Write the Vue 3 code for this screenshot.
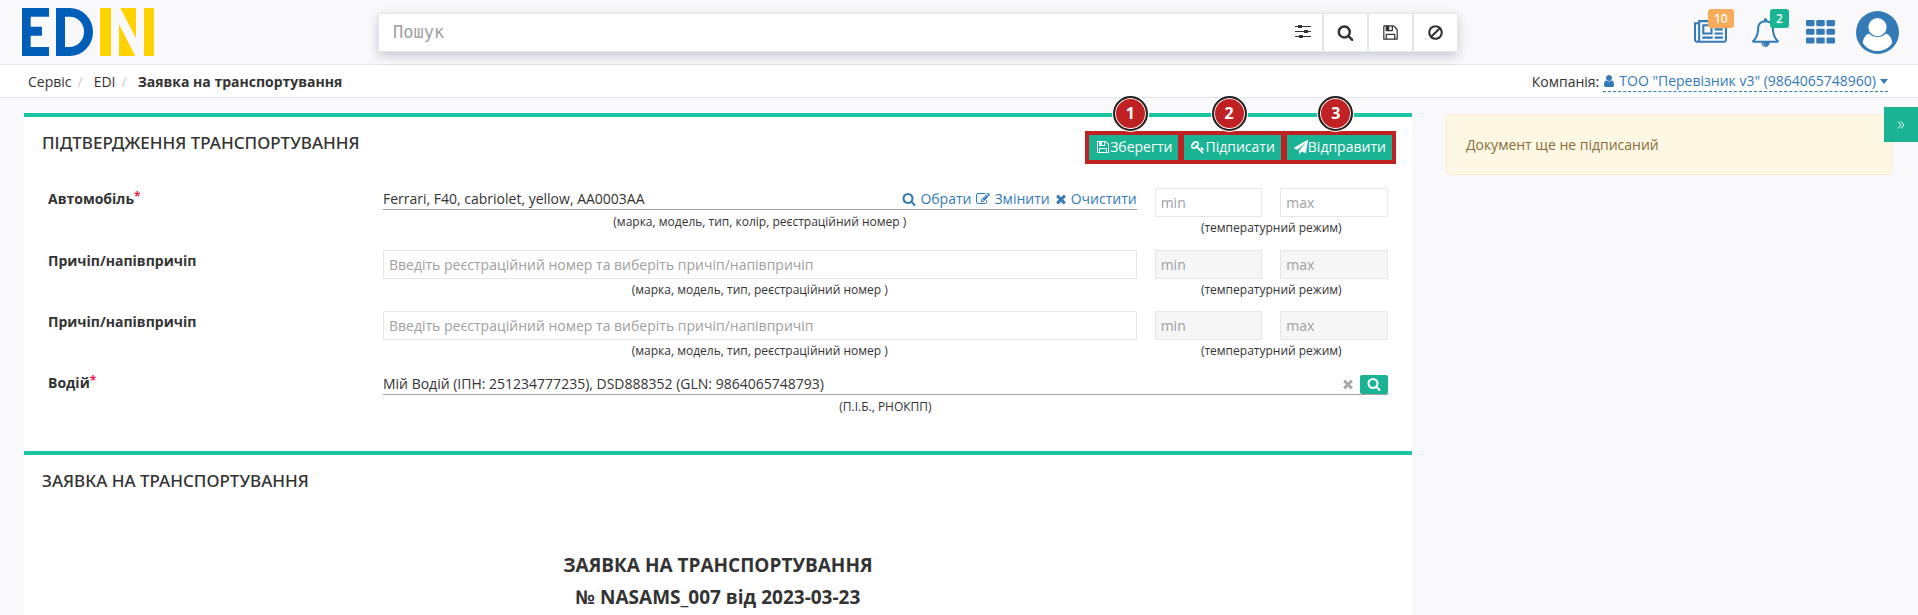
<script setup>
import { ref } from 'vue'

const icons = {
  search: 'M1216 832q0-185-131.5-316.5t-316.5-131.5-316.5 131.5-131.5 316.5 131.5 316.5 316.5 131.5 316.5-131.5 131.5-316.5zm512 832q0 52-38 90t-90 38q-54 0-90-38l-343-342q-179 124-399 124-143 0-273.5-55.5t-225-150-150-225-55.5-273.5 55.5-273.5 150-225 225-150 273.5-55.5 273.5 55.5 225 150 150 225 55.5 273.5q0 220-124 399l343 343q37 37 37 90z',
  save: 'M512 1536h768v-384h-768v384zm896 0h128v-896q0-14-10-38.5t-20-34.5l-281-281q-10-10-34-20t-39-10v416q0 40-28 68t-68 28h-576q-40 0-68-28t-28-68v-416h-128v1280h128v-416q0-40 28-68t68-28h832q40 0 68 28t28 68v416zm-384-928v-320q0-13-9.5-22.5t-22.5-9.5h-192q-13 0-22.5 9.5t-9.5 22.5v320q0 13 9.5 22.5t22.5 9.5h192q13 0 22.5-9.5t9.5-22.5zm640 32v928q0 40-28 68t-68 28h-1344q-40 0-68-28t-28-68v-1344q0-40 28-68t68-28h928q40 0 88 20t76 48l280 280q28 28 48 76t20 88z',
  ban: 'M1440 893q0-161-87-295l-754 753q137 89 297 89 111 0 211.5-43.5t173.5-116.5 116-174.5 43-212.5zm-999 299l755-754q-135-91-300-91-148 0-273 73t-198 199-73 274q0 162 89 299zm1223-299q0 157-61 300t-163.5 246-245 164-298.5 61-298.5-61-245-164-163.5-246-61-300 61-299.5 163.5-245.5 245-164 298.5-61 298.5 61 245 164 163.5 245.5 61 299.5z',
  times: 'M1490 1322q0 40-28 68l-136 136q-28 28-68 28t-68-28l-294-294-294 294q-28 28-68 28t-68-28l-136-136q-28-28-28-68t28-68l294-294-294-294q-28-28-28-68t28-68l136-136q28-28 68-28t68 28l294 294 294-294q28-28 68-28t68 28l136 136q28 28 28 68t-28 68l-294 294 294 294q28 28 28 68z',
  edit: 'M888 1184l116-116-152-152-116 116v56h96v96h56zm440-720q-16-16-33 1l-350 350q-17 17-1 33t33-1l350-350q17-17 1-33zm80 594v190q0 119-84.5 203.5t-203.5 84.5h-832q-119 0-203.5-84.5t-84.5-203.5v-832q0-119 84.5-203.5t203.5-84.5h832q63 0 117 25 15 7 18 23 3 17-9 29l-49 49q-14 14-32 8-23-6-45-6h-832q-66 0-113 47t-47 113v832q0 66 47 113t113 47h832q66 0 113-47t47-113v-126q0-13 9-22l64-64q15-15 35-7t20 29zm-96-738l288 288-672 672h-288v-288zm444 132l-92 92-288-288 92-92q28-28 68-28t68 28l152 152q28 28 28 68t-28 68z',
  user: 'M1536 1399q0 109-62.5 187t-150.5 78h-854q-88 0-150.5-78t-62.5-187q0-85 8.5-160.5t31.5-152 58.5-131 94-89 134.5-34.5q131 128 313 128t313-128q76 0 134.5 34.5t94 89 58.5 131 31.5 152 8.5 160.5zm-256-887q0 159-112.5 271.5t-271.5 112.5-271.5-112.5-112.5-271.5 112.5-271.5 271.5-112.5 271.5 112.5 112.5 271.5z',
  key: 'M832 512q0-80-56-136t-136-56-136 56-56 136q0 42 19 83-41-19-83-19-80 0-136 56t-56 136 56 136 136 56 136-56 56-136q0-42-19-83 41 19 83 19 80 0 136-56t56-136zm851 704q0 17-49 66t-66 49q-9 0-28.5-16t-36.5-33-38.5-40-24.5-26l-96 96 220 220q28 28 28 68 0 42-39 81t-81 39q-40 0-68-28l-671-671q-176 131-365 131-163 0-265.5-102.5t-102.5-265.5q0-160 95-313t248-248 313-95q163 0 265.5 102.5t102.5 265.5q0 189-131 365l355 355 96-96q-3-3-26-24.5t-40-38.5-33-36.5-16-28.5q0-17 49-66t66-49q13 0 23 10 6 6 46 44.5t82 79.5 86.5 86 73 78 28.5 41z',
  send: 'M1764 11q33 24 27 64l-256 1536q-5 29-32 45-14 8-31 8-11 0-24-5l-453-185-242 295q-18 23-49 23-13 0-22-4-19-7-30.5-23.5t-11.5-36.5v-349l864-1059-1069 925-395-162q-37-14-40-55-2-40 32-59l1664-960q15-9 32-9 20 0 36 11z',
  news: 'M1024 512h-384v384h384v-384zm128 640v128h-640v-128h640zm0-768v640h-640v-640h640zm640 768v128h-512v-128h512zm0-256v128h-512v-128h512zm0-256v128h-512v-128h512zm0-256v128h-512v-128h512zm-1536 960v-960h-128v960q0 26 19 45t45 19 45-19 19-45zm1664 0v-1088h-1536v1088q0 33-11 64h1483q26 0 45-19t19-45zm128-1216v1216q0 80-56 136t-136 56h-1664q-80 0-136-56t-56-136v-1088h256v-128h1792z',
  bell: 'M912 1696q0-16-16-16-59 0-101.5-42.5t-42.5-101.5q0-16-16-16t-16 16q0 73 51.5 124.5t124.5 51.5q16 0 16-16zm-666-288h1300q-266-300-266-832 0-51-24-105t-69-103-121.5-80.5-169.5-31.5-169.5 31.5-121.5 80.5-69 103-24 105q0 532-266 832zm1482 0q0 52-38 90t-90 38h-448q0 106-75 181t-181 75-181-75-75-181h-448q-52 0-90-38t-38-90q50-42 91-88t85-119.5 74.5-158.5 50-206 19.5-260q0-152 117-282.5t307-158.5q-8-19-8-39 0-40 28-68t68-28 68 28 28 68q0 20-8 39 190 28 307 158.5t117 282.5q0 139 19.5 260t50 206 74.5 158.5 85 119.5 91 88z'
}

const query = ref('')
const car = ref('Ferrari, F40, cabriolet, yellow, AA0003AA')
const driver = ref('Мій Водій (ІПН: 251234777235), DSD888352 (GLN: 9864065748793)')
const carRange = ref({ min: '', max: '' })
const trailers = ref([{ id: 'trailer-1', number: '' }, { id: 'trailer-2', number: '' }])

const actions = [
  { n: 1, label: 'Зберегти', icon: 'save' },
  { n: 2, label: 'Підписати', icon: 'key' },
  { n: 3, label: 'Відправити', icon: 'send' }
]
</script>

<template>
  <div class="page">
    <header class="topbar">
      <a class="logo" href="#" aria-label="EDIN">
        <svg viewBox="66 24 396 144">
          <g fill="#005eb8">
            <path d="M66 24h81v26H92v30h34v27H92v34h55v27H66z" />
            <path fill-rule="evenodd" d="M168 24h41a70 72 0 0 1 0 144h-41zM195 50v91h14a43 45.500 0 0 0 0-91z" />
          </g>
          <path fill="#ffd200" d="M300 24h33v144h-33zM361 24h47v91zM357 73l49 95h-49zM432 24h30v144h-30z" />
        </svg>
      </a>

      <form class="search" role="search" @submit.prevent>
        <input v-model="query" class="search-input" type="text" placeholder="Пошук" aria-label="Пошук" />
        <button class="filter" type="button" aria-label="Фільтри">
          <svg viewBox="0 0 16 14" fill="currentColor">
            <path d="M0 1h16v1H0zM0 6h16v1H0zM0 11h16v1H0z" />
            <path d="M3 0h4v3H3zM9 5h4v3H9zM4 10h4v3H4z" />
          </svg>
        </button>
        <button type="submit" aria-label="Шукати"><svg class="i17" viewBox="0 0 1792 1792"><path :d="icons.search" /></svg></button>
        <button type="button" aria-label="Зберегти пошук"><svg class="i17" viewBox="0 0 1792 1792"><path :d="icons.save" /></svg></button>
        <button type="button" aria-label="Скинути"><svg class="i17" viewBox="0 0 1792 1792"><path :d="icons.ban" /></svg></button>
      </form>

      <nav class="tools">
        <a class="tool news" href="#" aria-label="Новини">
          <svg viewBox="0 0 2048 1792"><path :d="icons.news" /></svg>
          <span class="count orange">10</span>
        </a>
        <a class="tool bell" href="#" aria-label="Сповіщення">
          <svg viewBox="0 0 1792 1792"><path :d="icons.bell" /></svg>
          <span class="count green">2</span>
        </a>
        <a class="tool apps" href="#" aria-label="Застосунки">
          <svg viewBox="0 0 85 69">
            <template v-for="r in 3" :key="r">
              <rect v-for="c in 3" :key="c" :x="(c - 1) * 30" :y="(r - 1) * 25.5" width="25" height="18" rx="4" />
            </template>
          </svg>
        </a>
        <a class="tool avatar" href="#" aria-label="Профіль">
          <svg viewBox="588 32 128 128">
            <circle cx="652" cy="96" r="64" />
            <circle cx="652" cy="80" r="27" fill="#fff" />
            <path fill="#fff" d="M608 127c1-13 7-23 18-28 15 14 37 14 52 0 11 5 17 15 18 28-10 15-26 24-44 24s-34-9-44-24z" />
          </svg>
        </a>
      </nav>
    </header>

    <div class="crumbbar">
      <nav class="crumbs" aria-label="Навігація">
        <a href="#">Сервіс</a><span class="sep">/</span>
        <a href="#">EDI</a><span class="sep">/</span>
        <strong>Заявка на транспортування</strong>
      </nav>
      <div class="company">
        <span>Компанія:</span>
        <a href="#">
          <svg class="i14 person" viewBox="128 0 1536 1792"><path :d="icons.user" /></svg>
          <span>ТОО "Перевізник v3" (9864065748960)</span>
          <svg class="caret" viewBox="0 0 8 5"><path d="M0 0h8L4 5z" /></svg>
        </a>
      </div>
    </div>

    <div class="columns">
      <main class="main">
        <section class="panel confirm">
          <div class="panel-head">
            <h2>ПІДТВЕРДЖЕННЯ ТРАНСПОРТУВАННЯ</h2>
            <div class="actions">
              <div v-for="a in actions" :key="a.n" class="action">
                <button type="button">
                  <svg class="i14" viewBox="0 0 1792 1792"><path :d="icons[a.icon]" /></svg>{{ a.label }}
                </button>
                <span class="step">{{ a.n }}</span>
              </div>
            </div>
          </div>

          <form class="fields" @submit.prevent>
            <div class="row">
              <label for="car">Автомобіль<sup>*</sup></label>
              <div class="vehicle">
                <div>
                  <div class="value">
                    <input id="car" v-model="car" type="text" readonly />
                    <span class="links">
                      <a href="#"><svg class="i14" viewBox="0 0 1792 1792"><path :d="icons.search" /></svg> Обрати</a>
                      <a href="#"><svg class="i14" viewBox="0 0 1792 1792"><path :d="icons.edit" /></svg> Змінити</a>
                      <a href="#"><svg class="i14 cross" viewBox="256 0 1280 1792"><path :d="icons.times" /></svg> Очистити</a>
                    </span>
                  </div>
                  <p class="hint">(марка, модель, тип, колір, реєстраційний номер )</p>
                </div>
                <div class="temp">
                  <div class="range">
                    <input v-model="carRange.min" class="box" type="text" placeholder="min" aria-label="Мінімальна температура" />
                    <input v-model="carRange.max" class="box" type="text" placeholder="max" aria-label="Максимальна температура" />
                  </div>
                  <p class="hint">(температурний режим)</p>
                </div>
              </div>
            </div>

            <div v-for="t in trailers" :key="t.id" class="row">
              <label :for="t.id">Причіп/напівпричіп</label>
              <div class="vehicle">
                <div>
                  <input :id="t.id" v-model="t.number" class="box" type="text" placeholder="Введіть реєстраційний номер та виберіть причіп/напівпричіп" />
                  <p class="hint">(марка, модель, тип, реєстраційний номер )</p>
                </div>
                <div class="temp">
                  <div class="range">
                    <input class="box" type="text" placeholder="min" aria-label="Мінімальна температура" disabled />
                    <input class="box" type="text" placeholder="max" aria-label="Максимальна температура" disabled />
                  </div>
                  <p class="hint">(температурний режим)</p>
                </div>
              </div>
            </div>

            <div class="row">
              <label for="driver">Водій<sup>*</sup></label>
              <div>
                <div class="value tall">
                  <input id="driver" v-model="driver" type="text" readonly />
                  <button class="clear" type="button" aria-label="Очистити"><svg class="i14 cross" viewBox="256 0 1280 1792"><path :d="icons.times" /></svg></button>
                  <button class="find" type="button" aria-label="Знайти"><svg class="i14" viewBox="0 0 1792 1792"><path :d="icons.search" /></svg></button>
                </div>
                <p class="hint">(П.І.Б., РНОКПП)</p>
              </div>
            </div>
          </form>
        </section>

        <section class="panel order">
          <div class="panel-head">
            <h2>ЗАЯВКА НА ТРАНСПОРТУВАННЯ</h2>
          </div>
          <h1>ЗАЯВКА НА ТРАНСПОРТУВАННЯ<br />№ NASAMS_007 від 2023-03-23</h1>
        </section>
      </main>

      <aside class="side">
        <div class="notice" role="status">Документ ще не підписаний</div>
        <button class="collapse" type="button" aria-label="Згорнути панель">
          <svg viewBox="0 0 8 8"><path d="M1 0.500L4 4 1 7.500M4 0.500L7 4 4 7.500" /></svg>
        </button>
      </aside>
    </div>
  </div>
</template>

<style>
body {
  margin: 0;
  background: #f9f9fb;
}
</style>

<style scoped>
.page {
  display: flex;
  flex-direction: column;
  min-height: 100vh;
  color: #333;
  font: 14px/20px "Open Sans", "Noto Sans", sans-serif;
}
.page * {
  box-sizing: border-box;
}
a {
  color: #337ab7;
  text-decoration: none;
}
svg {
  display: block;
  fill: currentColor;
}
button,
input {
  margin: 0;
  padding: 0;
  border: 0;
  font: inherit;
  color: inherit;
  background: none;
}
button {
  cursor: pointer;
}
input {
  min-width: 0;
}
input::placeholder {
  color: #a0a0a0;
  opacity: 1;
}
.i14 { width: 14px; height: 14px; }
.i17 { width: 17px; height: 17px; }
.cross,
.person { width: 12px; }

/* Top bar */
.topbar {
  display: grid;
  grid-template-columns: minmax(0, 356fr) minmax(0, 1080fr) minmax(0, 441fr);
  align-items: center;
  height: 65px;
  padding: 0 19px 0 22px;
  border-bottom: 1px solid #e2e6ea;
}
.logo {
  width: 132px;
}
.search {
  display: flex;
  height: 39px;
  background: #fff;
  border: 1px solid #e5e6e7;
  box-shadow: 0 4px 10px rgba(50, 50, 93, 0.24);
}
.search-input {
  flex: 1;
  padding: 0 14px;
  font: 17px "DejaVu Sans Mono", monospace;
  outline: 0;
}
.search button {
  display: grid;
  place-items: center;
  width: 45px;
  border-left: 2px solid #e5e6e7;
}
.search .filter {
  width: 38px;
  border: 0;
}
.filter svg {
  width: 16px;
  height: 14px;
}
.tools {
  display: flex;
  align-items: center;
  justify-content: flex-end;
}
.tool {
  position: relative;
}
.news { width: 33px; margin-right: 24px; }
.bell { width: 29px; margin-right: 26px; }
.apps { width: 29px; margin-right: 21px; }
.avatar { width: 43px; }
.count {
  position: absolute;
  top: -9px;
  height: 19px;
  padding: 0 6px;
  border-radius: 3px;
  color: #fff;
  font-family: "Noto Sans", "Open Sans", sans-serif;
  font-size: 12px;
  font-weight: 500;
  line-height: 19px;
}
.news .count { left: 14px; }
.bell .count { left: 19px; }
.orange { background: #f8ac59; }
.green { background: #1ab394; }

/* Breadcrumbs */
.crumbbar {
  display: flex;
  align-items: center;
  justify-content: space-between;
  height: 33px;
  padding: 1px 30px 0 28px;
  background: #fff;
  border-bottom: 1px solid #e2e6ea;
}
.crumbs {
  display: flex;
}
.crumbs a {
  color: #333;
}
.sep {
  padding: 0 11px 0 6px;
  color: #ccc;
}
.company,
.company a {
  display: flex;
  align-items: center;
  gap: 4px;
}
.company a {
  border-bottom: 1px dashed #337ab7;
}
.caret {
  width: 8px;
  height: 5px;
}

/* Columns */
.columns {
  flex: 1;
  display: grid;
  grid-template-columns: minmax(0, 28fr) minmax(0, 9fr);
  gap: 34px;
  padding: 15px 26px 0 24px;
}
.main {
  display: flex;
  flex-direction: column;
}
.panel {
  background: #fff;
  border-top: 4px solid #1dc5a3;
}
.confirm {
  padding-bottom: 18px;
}
.order {
  flex: 1;
}
.panel-head {
  display: flex;
  align-items: flex-start;
  justify-content: space-between;
  padding: 14px 16px 0 18px;
}
h2 {
  margin: 2px 0 0;
  font-family: "Noto Sans", "Open Sans", sans-serif;
  font-size: 17px;
  font-weight: 500;
  line-height: 20px;
}
.actions {
  display: flex;
  gap: 6px;
  padding: 4px;
  background: #c02224;
}
.action {
  position: relative;
}
.action button {
  display: flex;
  align-items: center;
  height: 25px;
  padding: 0 6px 2px 7px;
  background: #1ab394;
  color: #fff;
}
.step {
  position: absolute;
  top: -39px;
  left: 50%;
  width: 35px;
  height: 35px;
  margin-left: -21px;
  border: 2px solid #222;
  border-radius: 50%;
  background: #c02224;
  box-shadow: inset 0 0 0 1px #fff, 0 0 0 1px #fff;
  color: #fff;
  font-size: 16px;
  font-weight: 700;
  line-height: 31px;
  text-align: center;
}

/* Form */
.fields {
  padding: 24px 24px 0;
}
.row {
  display: grid;
  grid-template-columns: minmax(0, 1fr) minmax(0, 3fr);
  min-height: 61px;
}
.row:first-child {
  min-height: 62px;
}
.row label {
  padding-top: 1px;
  font-weight: 700;
}
sup {
  color: #ed1c4b;
  font-size: 12px;
  line-height: 0;
  vertical-align: 3px;
}
.vehicle {
  display: grid;
  grid-template-columns: minmax(0, 3fr) minmax(0, 1fr);
}
.value {
  display: flex;
  align-items: center;
  height: 22px;
  border-bottom: 1px solid #a3a3a3;
}
.tall {
  height: 23px;
  padding-top: 2px;
}
.value input {
  flex: 1;
  outline: 0;
}
.links {
  display: flex;
  gap: 5px;
}
.links a {
  display: flex;
  align-items: center;
  gap: 4px;
}
.box {
  display: block;
  width: 100%;
  height: 29px;
  padding: 0 5px;
  border: 1px solid #e5e6e7;
  border-radius: 1px;
  background: #fff;
}
.box:disabled {
  background: #f6f6f6;
}
.temp {
  padding-left: 18px;
}
.range {
  display: grid;
  grid-template-columns: 1fr 1fr;
  gap: 18px;
}
.hint {
  margin: 2px 0 0;
  font-size: 12px;
  line-height: 20px;
  text-align: center;
}
.box + .hint,
.range + .hint {
  margin-top: 1px;
}
.clear {
  margin-right: 6px;
  color: #aaa;
}
.find {
  display: grid;
  place-items: center;
  width: 28px;
  height: 19px;
  border-radius: 2px;
  background: #1ab394;
  color: #fff;
}
h1 {
  margin: 58px 0 0;
  font-size: 19px;
  font-weight: 700;
  line-height: 32px;
  text-align: center;
}

/* Side column */
.side {
  position: relative;
  padding-top: 2px;
}
.notice {
  padding: 19px;
  border: 1px solid #faebcc;
  border-radius: 4px;
  background: #fcf8e3;
  color: #8a6d3b;
}
.collapse {
  position: absolute;
  top: -6px;
  right: -26px;
  display: grid;
  place-items: center;
  width: 34px;
  height: 35px;
  background: #1ab394;
  color: #fff;
}
.collapse svg {
  width: 8px;
  height: 8px;
  fill: none;
  stroke: currentColor;
}
</style>
